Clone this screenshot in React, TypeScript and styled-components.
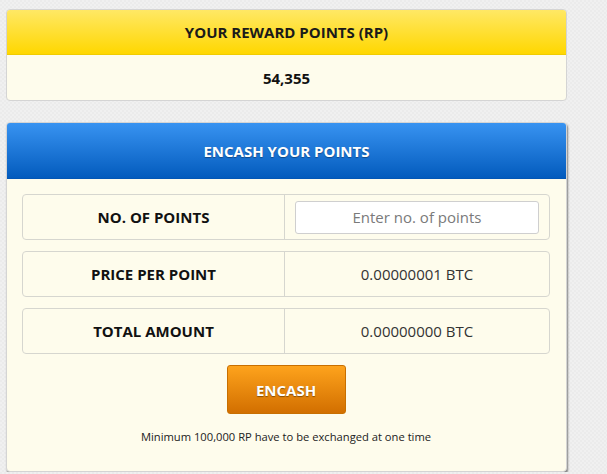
import React from "react";
import styled, { createGlobalStyle } from "styled-components";

const Global = createGlobalStyle`
  html, body { margin: 0; padding: 0; }
  body {
    background-color: #ebebeb;
    background-image: linear-gradient(45deg, rgba(255,255,255,0.25) 25%, transparent 25%, transparent 75%, rgba(255,255,255,0.25) 75%),
      linear-gradient(45deg, rgba(255,255,255,0.25) 25%, transparent 25%, transparent 75%, rgba(255,255,255,0.25) 75%);
    background-size: 4px 4px;
    background-position: 0 0, 2px 2px;
    font-family: "Open Sans", "Liberation Sans", sans-serif;
    color: #111;
  }
`;

const Page = styled.div`
  width: 561px;
  padding: 9px 0 0 6px;
  display: flex;
  flex-direction: column;
  gap: 21px;
`;

const Card = styled.div<{ $shadow?: boolean }>`
  border: 1px solid #d4d4d4;
  border-radius: 4px;
  background: #fefcec;
  overflow: hidden;
  box-shadow: ${(p) => (p.$shadow ? "1px 2px 2px rgba(0,0,0,0.45)" : "none")};
`;

const Header = styled.div<{ $tone: "yellow" | "blue" }>`
  display: flex;
  align-items: center;
  justify-content: center;
  font-weight: 700;
  font-size: 15px;
  height: ${(p) => (p.$tone === "yellow" ? "44px" : "55px")};
  color: ${(p) => (p.$tone === "yellow" ? "#1a1a1a" : "#ffffff")};
  background: ${(p) =>
    p.$tone === "yellow"
      ? "linear-gradient(#ffe865, #ffd700)"
      : "linear-gradient(#3893f1, #035bbd)"};
  border-bottom: ${(p) => (p.$tone === "yellow" ? "1px solid #f0cc00" : "1px solid #0356b5")};
  text-shadow: ${(p) => (p.$tone === "blue" ? "0 1px 1px rgba(0,0,0,0.35)" : "none")};
`;

const Points = styled.div`
  height: 45px;
  display: flex;
  align-items: center;
  justify-content: center;
  font-weight: 700;
  font-size: 15px;
  color: #111;
`;

const Body = styled.div`
  padding: 15px 16px 0 15px;
  display: flex;
  flex-direction: column;
  align-items: stretch;
`;

const Rows = styled.div`
  display: flex;
  flex-direction: column;
  gap: 11px;
`;

const Row = styled.div`
  display: grid;
  grid-template-columns: 262px 1fr;
  height: 44px;
  border: 1px solid #d6d6cf;
  border-radius: 4px;
`;

const Label = styled.div`
  display: flex;
  align-items: center;
  justify-content: center;
  font-weight: 700;
  font-size: 15px;
  color: #111;
  border-right: 1px solid #d6d6cf;
`;

const Value = styled.div`
  display: flex;
  align-items: center;
  justify-content: center;
  font-size: 15px;
  color: #333;
  padding: 0 10px;
`;

const Input = styled.input`
  width: 100%;
  box-sizing: border-box;
  height: 33px;
  border: 1px solid #cfcfcf;
  border-radius: 3px;
  background: #fff;
  text-align: center;
  font-family: "Open Sans", "Liberation Sans", sans-serif;
  font-size: 15px;
  color: #333;
  outline: none;
  &::placeholder { color: #7a7a7a; }
`;

const Button = styled.button`
  align-self: center;
  margin-top: 11px;
  width: 119px;
  height: 49px;
  border: 1px solid #c86f00;
  border-radius: 3px;
  background: linear-gradient(#fea31c, #d26f00);
  color: #fff;
  font-family: "Open Sans", "Liberation Sans", sans-serif;
  font-weight: 700;
  font-size: 15px;
  text-shadow: 0 1px 1px rgba(0,0,0,0.4);
  cursor: pointer;
`;

const Note = styled.p`
  margin: 15px 0 27px;
  text-align: center;
  font-size: 11.2px;
  color: #222;
`;

export default function App() {
  return (
    <>
      <Global />
      <Page>
        <Card>
          <Header $tone="yellow">YOUR REWARD POINTS (RP)</Header>
          <Points>54,355</Points>
        </Card>
        <Card $shadow>
          <Header $tone="blue">ENCASH YOUR POINTS</Header>
          <Body>
            <Rows>
              <Row>
                <Label>NO. OF POINTS</Label>
                <Value>
                  <Input placeholder="Enter no. of points" />
                </Value>
              </Row>
              <Row>
                <Label>PRICE PER POINT</Label>
                <Value>0.00000001 BTC</Value>
              </Row>
              <Row>
                <Label>TOTAL AMOUNT</Label>
                <Value>0.00000000 BTC</Value>
              </Row>
            </Rows>
            <Button>ENCASH</Button>
            <Note>Minimum 100,000 RP have to be exchanged at one time</Note>
          </Body>
        </Card>
      </Page>
    </>
  );
}
